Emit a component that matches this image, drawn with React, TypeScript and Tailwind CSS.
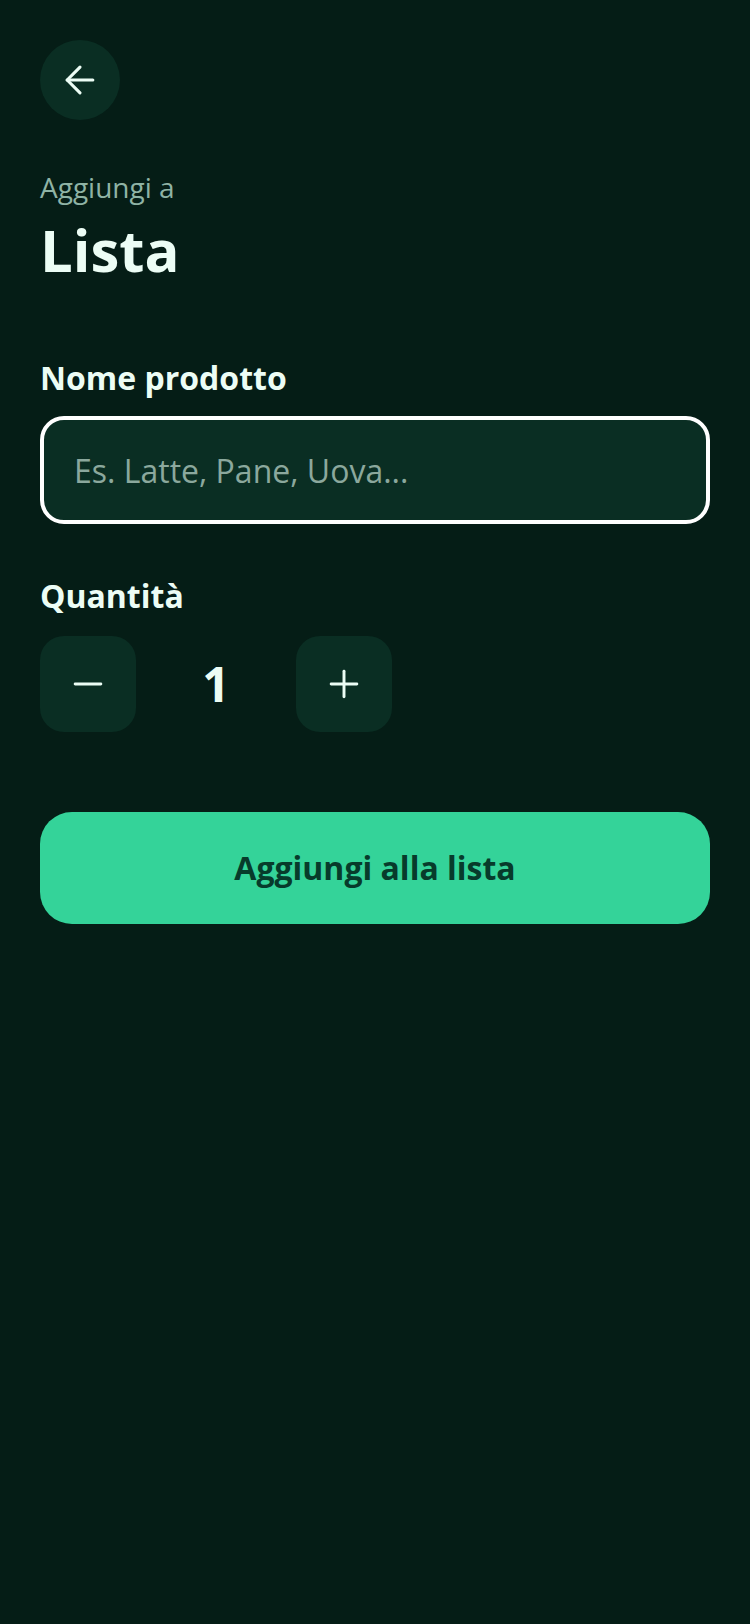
import { ArrowLeft, Minus, Plus } from "lucide-react";

export default function App() {
  return (
    <div className="min-h-[1624px] w-full bg-[#051d16] px-10 pt-10 font-['Open_Sans',sans-serif] text-[#ecfdf5]">
      <button className="flex h-20 w-20 items-center justify-center rounded-full bg-[#0a2e23]">
        <ArrowLeft size={44} strokeWidth={1.7} />
      </button>

      <p className="mt-[53px] text-[28px] leading-[28px] text-[#8fb3a5]">Aggiungi a</p>
      <h1 className="mt-5 text-[58px] font-bold leading-[58px]">Lista</h1>

      <label className="mt-[83px] block text-[32px] font-bold leading-[32px]">Nome prodotto</label>
      <input
        type="text"
        placeholder="Es. Latte, Pane, Uova..."
        className="mt-[22px] block h-[108px] w-full rounded-3xl border-4 border-white bg-[#0a2e23] px-[30px] text-[32px] text-[#ecfdf5] outline-none placeholder:text-[#8ba89d]"
      />

      <p className="mt-14 text-[32px] font-bold leading-[32px]">Quantità</p>
      <div className="mt-6 flex items-center gap-8">
        <button className="flex h-24 w-24 items-center justify-center rounded-3xl bg-[#0a2e23]">
          <Minus size={44} strokeWidth={1.6} />
        </button>
        <span className="w-24 text-center text-[48px] font-bold leading-none">1</span>
        <button className="flex h-24 w-24 items-center justify-center rounded-3xl bg-[#0a2e23]">
          <Plus size={44} strokeWidth={1.6} />
        </button>
      </div>

      <button className="mt-20 flex h-28 w-full items-center justify-center rounded-[32px] bg-[#34d399] text-[32px] font-bold text-[#073b2b]">
        Aggiungi alla lista
      </button>
    </div>
  );
}
